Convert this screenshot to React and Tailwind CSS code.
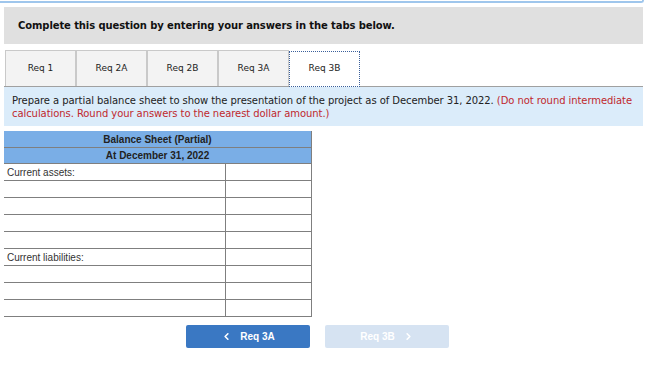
import { ChevronLeft, ChevronRight } from "lucide-react";

const tabs = ["Req 1", "Req 2A", "Req 2B", "Req 3A", "Req 3B"];

const rows = [
  { label: "Current assets:" },
  { label: "" },
  { label: "" },
  { label: "" },
  { label: "" },
  { label: "Current liabilities:" },
  { label: "" },
  { label: "" },
  { label: "" },
];

function Tabs() {
  return (
    <div className="flex items-end pl-[1px] border-b border-[#a0a0a0] h-[37px] mt-[6px]">
      {tabs.map((t, i) => {
        const active = i === tabs.length - 1;
        return (
          <div
            key={t}
            className={
              active
                ? "w-[71px] h-[36px] -mb-px bg-white border border-dotted border-[#3a5f9a] flex items-center justify-center text-[9px] text-[#222]"
                : "w-[71px] h-[36px] bg-[#f3f3f3] border border-[#c9c9c9] border-b-0 flex items-center justify-center text-[9px] text-[#222]"
            }
          >
            {t}
          </div>
        );
      })}
    </div>
  );
}

function BalanceSheet() {
  return (
    <div className="w-[308px] mt-[5px] font-['Liberation_Sans',Arial,sans-serif] text-[10px]">
      <div className="bg-[#7aaee6] border-r border-[#7f7f7f] h-[17px] flex items-center justify-center font-bold text-[#222] border-b border-[#5a86bd]">
        Balance Sheet (Partial)
      </div>
      <div className="bg-[#7aaee6] border-r border-[#7f7f7f] h-[16px] flex items-center justify-center font-bold text-[#222] border-b border-[#7f7f7f]">
        At December 31, 2022
      </div>
      {rows.map((r, i) => (
        <div key={i} className="flex h-[17px] border-b border-[#7f7f7f]">
          <div className="w-[221px] flex items-center pl-[3px] text-[#333]">{r.label}</div>
          <div className="flex-1 border-l border-r border-[#7f7f7f]"></div>
        </div>
      ))}
    </div>
  );
}

export default function App() {
  return (
    <div className="w-[655px] h-[389px] bg-white font-['DejaVu_Sans',Verdana,sans-serif]">
      <div className="w-[644px] h-[3px] border-b-2 border-r-2 border-[#9fc6ec] rounded-br-[3px]"></div>
      <div className="ml-[4px] w-[639px] mt-[4px] h-[37px] bg-[#e0e0e0] flex items-center pl-[14px] text-[10px] font-bold text-[#111] tracking-[-0.1px]">
        Complete this question by entering your answers in the tabs below.
      </div>
      <div className="ml-[4px] w-[639px]">
        <Tabs />
        <div className="bg-[#dbecfa] h-[39px] pl-[8px] pr-[6px] pt-[7px] text-[10px] leading-[13px] tracking-[-0.07px] text-[#222]">
          Prepare a partial balance sheet to show the presentation of the project as of December 31, 2022.{" "}
          <span className="text-[#c0282d]">
            (Do not round intermediate calculations. Round your answers to the nearest dollar amount.)
          </span>
        </div>
        <BalanceSheet />
        <div className="flex gap-[15px] ml-[182px] mt-[8px] font-['Liberation_Sans',Arial,sans-serif] text-[10px] font-bold">
          <button className="w-[124px] h-[23px] rounded-[2px] bg-[#3a78c3] text-white flex items-center justify-center gap-[8px]">
            <ChevronLeft size={11} strokeWidth={3.5} />
            <span>Req 3A</span>
          </button>
          <button className="w-[124px] h-[23px] rounded-[2px] bg-[#d6e3f2] text-white flex items-center justify-center gap-[8px]">
            <span>Req 3B</span>
            <ChevronRight size={11} strokeWidth={3.5} />
          </button>
        </div>
      </div>
    </div>
  );
}
